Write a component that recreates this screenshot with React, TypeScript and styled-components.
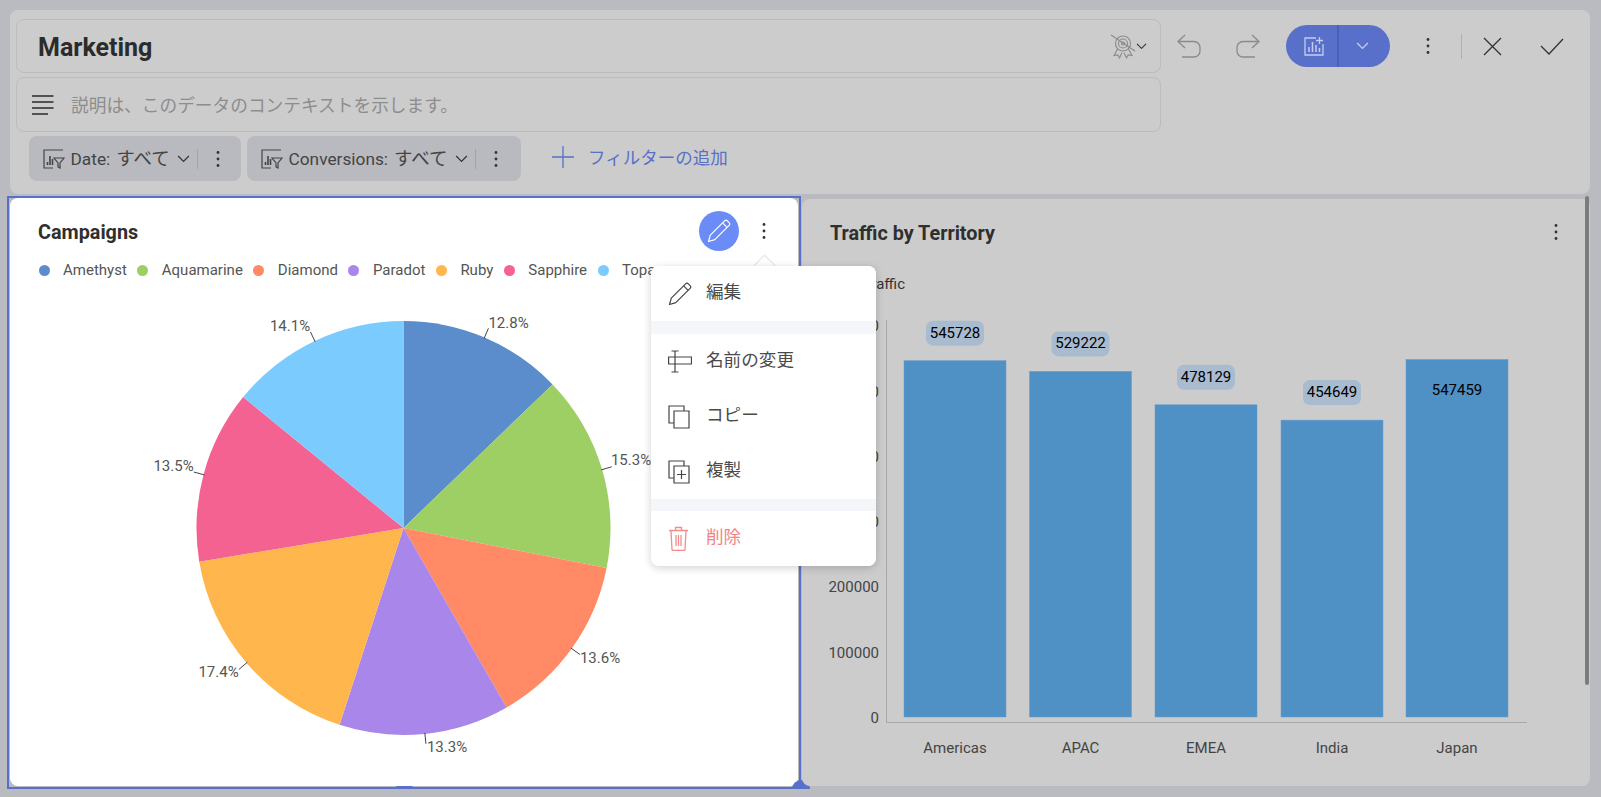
import React from "react";
import styled, { createGlobalStyle } from "styled-components";

const Global = createGlobalStyle`
  html, body { margin: 0; padding: 0; overflow: hidden; }
  body { font-family: Roboto, "Noto Sans CJK JP", sans-serif; background: #babbc0; }
  * { box-sizing: border-box; }
`;

const Page = styled.div`
  position: relative;
  width: 1601px;
  height: 797px;
  padding: 10px 11px 0 7px;
  background: #babbc0;
  overflow: hidden;
`;
const Header = styled.header`
  display: flex;
  align-items: flex-start;
  height: 184px;
  margin-left: 3px;
  padding: 9px 0 0 6px;
  background: #cccccc;
  border-radius: 8px;
`;
const TitleColumn = styled.div`
  display: flex;
  flex-direction: column;
  width: 1145px;
  flex: none;
`;
const TitleBox = styled.div`
  display: flex;
  align-items: center;
  height: 54px;
  padding: 0 13px 0 21px;
  border: 1px solid #bcbcbc;
  border-radius: 8px;
`;
const TitleText = styled.h1`
  flex: 1;
  margin: 3px 0 0;
  font-size: 25px;
  font-weight: 700;
  color: #2b2b2b;
`;
const DescBox = styled.div`
  display: flex;
  align-items: center;
  gap: 17px;
  height: 55px;
  margin-top: 4px;
  padding: 0 16px 0 15px;
  border: 1px solid #bcbcbc;
  border-radius: 8px;
`;
const DescText = styled.span`
  margin-bottom: 2px;
  font-size: 17.7px;
  color: #8d8d8d;
`;
const FilterRow = styled.div`
  display: flex;
  align-items: center;
  gap: 6px;
  height: 45px;
  margin: 4px 0 0 13px;
`;
const FilterChip = styled.div<{ $width: number }>`
  display: flex;
  align-items: center;
  width: ${(p) => p.$width}px;
  height: 45px;
  padding-left: 14px;
  background: #b9bac0;
  border-radius: 8px;
  color: #444;
`;
const ChipLabel = styled.span`
  margin-left: 5.5px;
  font-size: 17.3px;
  color: #444;
`;
const ChipValue = styled.span`
  margin: -3px 7px 0 6px;
  font-size: 18.5px;
  color: #444;
`;
const ChipDivider = styled.span`
  width: 1px;
  height: 20px;
  margin: 0 17px 0 7px;
  background: #a4a4a8;
`;
const AddFilter = styled.div`
  display: flex;
  align-items: center;
  gap: 13px;
  margin: 0 0 4px 24px;
  font-size: 17.5px;
  color: #5870c9;
`;
const Actions = styled.div`
  display: flex;
  align-items: center;
  height: 54px;
`;
const ActionIcon = styled.span<{ $ml: number }>`
  display: flex;
  margin-left: ${(p) => p.$ml}px;
`;
const SplitButton = styled.div`
  display: flex;
  width: 104px;
  height: 42px;
  margin-left: 26px;
  background: #5870c9;
  border-radius: 21px;
  overflow: hidden;
`;
const SplitMain = styled.div`
  display: flex;
  align-items: center;
  justify-content: center;
  width: 53px;
  padding-left: 4px;
  border-right: 2px solid #4a60b2;
`;
const SplitSide = styled.div`
  display: flex;
  align-items: center;
  justify-content: center;
  flex: 1;
  padding-right: 4px;
`;
const ActionDivider = styled.span`
  width: 1px;
  height: 25px;
  margin-left: 30px;
  background: #b0b0b0;
`;
const ChartRow = styled.div`
  display: flex;
  align-items: flex-start;
  margin-top: 2px;
`;
const SelectionFrame = styled.div`
  position: relative;
  flex: none;
  width: 794px;
  height: 593px;
  padding: 0 1px 1px;
  border: 2px solid #5870c9;
`;
const CampaignCard = styled.section`
  display: flex;
  flex-direction: column;
  height: 100%;
  background: #fff;
  border-radius: 8px;
`;
const CardHead = styled.div<{ $pr: number }>`
  display: flex;
  align-items: center;
  flex: none;
  height: 40px;
  margin-top: 13px;
  padding: 0 ${(p) => p.$pr}px 0 28px;
`;
const CardTitle = styled.h2`
  flex: 1;
  margin: 2px 0 0;
  font-size: 19.8px;
  font-weight: 700;
  color: #2f2f2f;
`;
const EditCircle = styled.span`
  display: flex;
  align-items: center;
  justify-content: center;
  width: 40px;
  height: 40px;
  margin-right: 22px;
  background: #6b8cf7;
  border-radius: 50%;
`;
const Legend = styled.div`
  display: flex;
  align-items: center;
  flex: none;
  height: 18px;
  margin-top: 10px;
  margin-bottom: 1px;
  padding-left: 28.5px;
`;
const LegendItem = styled.div`
  display: flex;
  align-items: center;
  margin-right: 10.5px;
  font-size: 15px;
  color: #555;
`;
const LegendDot = styled.span<{ $color: string }>`
  width: 11px;
  height: 11px;
  margin-right: 13.5px;
  border-radius: 50%;
  background: ${(p) => p.$color};
`;
const ChartSvg = styled.svg`
  display: block;
  flex: 1;
  min-height: 0;
  margin-top: 5px;
`;
const BottomHandle = styled.span`
  position: absolute;
  left: 386px;
  bottom: -2px;
  width: 19px;
  height: 3px;
  background: #5870c9;
  border-radius: 3px 3px 0 0;
`;
const CornerHandle = styled.span`
  position: absolute;
  right: -11px;
  bottom: -2px;
  width: 18px;
  height: 9px;
  background: #5870c9;
  border-radius: 9px 9px 0 0;
`;
const TrafficCard = styled.section`
  position: relative;
  display: flex;
  flex-direction: column;
  flex: 1;
  height: 587px;
  margin: 3px 0 0 1px;
  background: #cccccc;
  border-radius: 8px;
`;
const TrafficLegend = styled.div`
  flex: none;
  height: 18px;
  margin-top: 23px;
  padding-left: 61px;
  font-size: 15px;
  line-height: 18px;
  color: #333;
`;
const Scrollbar = styled.span`
  position: absolute;
  top: -3px;
  right: 1px;
  width: 4px;
  height: 489px;
  background: #7c7c7c;
  border-radius: 2px;
`;
const Menu = styled.div`
  position: absolute;
  left: 651px;
  top: 266px;
  display: flex;
  flex-direction: column;
  width: 225px;
  height: 300px;
  background: #f5f6fa;
  border-radius: 8px;
  box-shadow: 0 2px 8px rgba(0, 0, 0, 0.18);
  overflow: hidden;
`;
const MenuArrow = styled.span`
  position: absolute;
  left: 755.5px;
  top: 257.5px;
  width: 17px;
  height: 17px;
  background: #fff;
  border: 1px solid #e3e3e3;
  transform: rotate(45deg);
`;
const MenuGroup = styled.div<{ $mt?: number }>`
  display: flex;
  flex-direction: column;
  margin-top: ${(p) => p.$mt ?? 0}px;
  background: #fff;
`;
const MenuItem = styled.div<{ $danger?: boolean }>`
  display: flex;
  align-items: center;
  gap: 14px;
  height: 55px;
  padding-left: 17px;
  font-size: 17.6px;
  color: ${(p) => (p.$danger ? "#f58383" : "#4a4a4a")};
`;
const MenuLabel = styled.span`
  margin-bottom: 6px;
`;
const MenuIconSlot = styled.span`
  display: flex;
  width: 24px;
`;

const Kebab = ({ color = "#333" }: { color?: string }) => (
  <svg width="6" height="18" viewBox="0 0 6 18">
    <circle cx="3" cy="2.5" r="1.4" fill={color} />
    <circle cx="3" cy="9" r="1.4" fill={color} />
    <circle cx="3" cy="15.5" r="1.4" fill={color} />
  </svg>
);
const Chevron = ({ color = "#333", w = 13 }: { color?: string; w?: number }) => (
  <svg width={w} height={w * 0.6} viewBox="0 0 13 8" fill="none" stroke={color} strokeWidth="1.3">
    <path d="M1 1l5.5 5.5L12 1" />
  </svg>
);
const PencilIcon = ({ color, size = 24 }: { color: string; size?: number }) => (
  <svg width={size} height={size} viewBox="0 0 24 24" fill="none" stroke={color} strokeWidth="1.2" strokeLinejoin="round">
    <path d="M1.5 22.5l1.8-6.3L17.6 1.9a2 2 0 0 1 2.8 0l1.7 1.7a2 2 0 0 1 0 2.8L7.8 20.7z" />
    <path d="M15.6 3.9l4.5 4.5" />
  </svg>
);
const FilterChart = () => (
  <svg width="22" height="20" viewBox="0 0 22 20" fill="none" stroke="#444" strokeWidth="1.2">
    <path d="M20 1H1v18h9" />
    <path d="M4.5 16v-3M7 16V7M9.5 16v-6" strokeWidth="1.6" />
    <path d="M11 9h10l-4 5v5l-2-1.2V14z" fill="#b9bac0" />
  </svg>
);
const LinesIcon = () => (
  <svg width="22" height="20" viewBox="0 0 22 20" fill="none" stroke="#2a2a2a" strokeWidth="1.3">
    <path d="M0 1h21.5M0 7h21.5M0 13h21.5M0 19h16" />
  </svg>
);
const BadgeIcon = () => (
  <svg width="26" height="25" viewBox="0 0 26 25" fill="none" stroke="#8a8a8a" strokeWidth="1.1">
    <circle cx="13" cy="9.5" r="7.5" />
    <circle cx="13" cy="9.5" r="4.5" />
    <circle cx="13" cy="9.5" r="1.5" />
    <path d="M7.5 15l-3.5 6.5 3.8-.6 1.7 3 2.5-5.2M18.5 15l3.5 6.5-3.8-.6-1.700 3-2.500-5.200" />
    <path d="M1 1l24 16" />
  </svg>
);
const UndoIcon = () => (
  <svg width="24" height="24" viewBox="0 0 24 24" fill="none" stroke="#8a8a8a" strokeWidth="1.3">
    <path d="M8 1L1 7.5 8 14M1 7.5h16a6 6 0 0 1 6 6v3.500a6 6 0 0 1-6 6H5" />
  </svg>
);
const RedoIcon = () => (
  <svg width="24" height="24" viewBox="0 0 24 24" fill="none" stroke="#8a8a8a" strokeWidth="1.3">
    <path d="M16 1l7 6.5L16 14M23 7.5H7a6 6 0 0 0-6 6v3.500a6 6 0 0 0 6 6h12" />
  </svg>
);
const AddChartIcon = () => (
  <svg width="20" height="19" viewBox="0 0 20 19" fill="none" stroke="#c4cdee" strokeWidth="1.3">
    <path d="M12 1H1v17h18V7" />
    <path d="M15.5 0v7M12 3.5h7" />
    <path d="M5 15v-5M8.5 15V5M12 15V8M15.5 15v-4" strokeWidth="1.5" />
  </svg>
);
const CloseIcon = () => (
  <svg width="19" height="19" viewBox="0 0 19 19" stroke="#333" strokeWidth="1.3">
    <path d="M1 1l17 17M18 1L1 18" />
  </svg>
);
const CheckIcon = () => (
  <svg width="24" height="17" viewBox="0 0 24 17" fill="none" stroke="#333" strokeWidth="1.3">
    <path d="M1 8l8 8L23 1" />
  </svg>
);
const RenameIcon = () => (
  <svg width="24" height="24" viewBox="0 0 24 24" fill="none" stroke="#444" strokeWidth="1.2">
    <path d="M7 7H.6v7H7M7 7h16.5v7H7" />
    <path d="M7 1v21M3.5 1h7M3.5 22h7" />
  </svg>
);
const CopyIcon = () => (
  <svg width="22" height="24" viewBox="0 0 22 24" fill="none" stroke="#444" strokeWidth="1.2">
    <path d="M6 18H1V1h15v5" />
    <path d="M6 6h15v17H6z" />
  </svg>
);
const DuplicateIcon = () => (
  <svg width="22" height="24" viewBox="0 0 22 24" fill="none" stroke="#444" strokeWidth="1.2">
    <path d="M6 18H1V1h15v5" />
    <path d="M6 6h15v17H6z" />
    <path d="M13.5 10v9M9 14.5h9" />
  </svg>
);
const TrashIcon = () => (
  <svg width="22" height="25" viewBox="0 0 22 25" fill="none" stroke="#f58b8b" strokeWidth="1.3">
    <path d="M1 4.5h19M7.5 4.5V1.5h6v3" />
    <path d="M3 5l1 18.5a1 1 0 0 0 1 1h11a1 1 0 0 0 1-1L18 5" />
    <path d="M8 9v11M10.5 9v11M13 9v11" />
  </svg>
);

const slices = [
  { name: "Amethyst", color: "#5b8ccb", pct: 12.8, lx: 508.5, ly: 322.6 },
  { name: "Aquamarine", color: "#9dcf64", pct: 15.3, lx: 631, ly: 460 },
  { name: "Diamond", color: "#ff8a65", pct: 13.6, lx: 600, ly: 657.5 },
  { name: "Paradot", color: "#a986ea", pct: 13.3, lx: 447, ly: 747 },
  { name: "Ruby", color: "#ffb64d", pct: 17.4, lx: 218.5, ly: 672 },
  { name: "Sapphire", color: "#f46292", pct: 13.5, lx: 173.5, ly: 465.6 },
  { name: "Topaz", color: "#7ccbff", pct: 14.1, lx: 290, ly: 325.7 },
];
const CX = 403.5;
const CY = 528;
const R = 207;
const polar = (pct: number, r: number): [number, number] => {
  const a = (pct / 100) * 2 * Math.PI;
  return [CX + r * Math.sin(a), CY - r * Math.cos(a)];
};

const PieChart = () => {
  let acc = 0;
  return (
    <ChartSvg viewBox="10 285 788 501" preserveAspectRatio="xMinYMin meet">
      {slices.map((s) => {
        const start = acc;
        acc += s.pct;
        const [x1, y1] = polar(start, R);
        const [x2, y2] = polar(acc, R);
        const mid = start + s.pct / 2;
        const [ix, iy] = polar(mid, R - 1);
        const [ox, oy] = polar(mid, R + 10);
        return (
          <g key={s.name}>
            <path d={`M${CX} ${CY}L${x1} ${y1}A${R} ${R} 0 0 1 ${x2} ${y2}Z`} fill={s.color} />
            <path d={`M${ix} ${iy}L${ox} ${oy}`} stroke="#444" strokeWidth="1" />
            <text x={s.lx} y={s.ly + 5} textAnchor="middle" fontSize="15" fill="#555" fontFamily="Roboto">
              {s.pct}%
            </text>
          </g>
        );
      })}
    </ChartSvg>
  );
};

const bars = [
  { name: "Americas", v: 545728, x: 904, chip: true },
  { name: "APAC", v: 529222, x: 1029.5, chip: true },
  { name: "EMEA", v: 478129, x: 1155, chip: true },
  { name: "India", v: 454649, x: 1281, chip: true },
  { name: "Japan", v: 547459, x: 1406, chip: false },
];
const K = 0.000653;
const BarChart = () => (
  <ChartSvg viewBox="802 298 788 488" preserveAspectRatio="xMinYMin meet">
    {[0, 1, 2, 3, 4, 5, 6].map((i) => (
      <text key={i} x={879} y={723 - i * 65.3} textAnchor="end" fontSize="15" fill="#444" fontFamily="Roboto">
        {i * 100000}
      </text>
    ))}
    <path d="M886.5 320V722.5H1527" fill="none" stroke="#a8a8a8" strokeWidth="1" />
    {bars.map((b) => {
      const top = 717 - b.v * K;
      const labelY = b.chip ? top - 28 : top + 30;
      return (
        <g key={b.name}>
          <rect x={b.x} y={top} width={102} height={717 - top} fill="#4f90c5" stroke="#6a9ccb" strokeWidth="0.5" />
          {b.chip && <rect x={b.x + 22} y={labelY - 12} width={58} height={25} rx={7} fill="#a8bbcf" />}
          <text x={b.x + 51} y={labelY + 5} textAnchor="middle" fontSize="15" fill="#000" fontFamily="Roboto">
            {b.v}
          </text>
          <text x={b.x + 51} y={753} textAnchor="middle" fontSize="15" fill="#444" fontFamily="Roboto">
            {b.name}
          </text>
        </g>
      );
    })}
  </ChartSvg>
);

export default function App() {
  return (
    <Page>
      <Global />
      <Header>
        <TitleColumn>
          <TitleBox>
            <TitleText>Marketing</TitleText>
            <BadgeIcon />
            <Chevron w={11} />
          </TitleBox>
          <DescBox>
            <LinesIcon />
            <DescText>説明は、このデータのコンテキストを示します。</DescText>
          </DescBox>
          <FilterRow>
            <FilterChip $width={212}>
              <FilterChart />
              <ChipLabel>Date:</ChipLabel>
              <ChipValue>すべて</ChipValue>
              <Chevron />
              <ChipDivider />
              <Kebab />
            </FilterChip>
            <FilterChip $width={274}>
              <FilterChart />
              <ChipLabel>Conversions:</ChipLabel>
              <ChipValue>すべて</ChipValue>
              <Chevron />
              <ChipDivider />
              <Kebab />
            </FilterChip>
            <AddFilter>
              <svg width="24" height="24" viewBox="0 0 24 24" stroke="#5870c9" strokeWidth="1.3">
                <path d="M12 1v22M1 12h22" />
              </svg>
              フィルターの追加
            </AddFilter>
          </FilterRow>
        </TitleColumn>
        <Actions>
          <ActionIcon $ml={16}><UndoIcon /></ActionIcon>
          <ActionIcon $ml={35}><RedoIcon /></ActionIcon>
          <SplitButton>
            <SplitMain><AddChartIcon /></SplitMain>
            <SplitSide><Chevron color="#c4cdee" /></SplitSide>
          </SplitButton>
          <ActionIcon $ml={35}><Kebab /></ActionIcon>
          <ActionDivider />
          <ActionIcon $ml={21}><CloseIcon /></ActionIcon>
          <ActionIcon $ml={38}><CheckIcon /></ActionIcon>
        </Actions>
      </Header>
      <ChartRow>
        <SelectionFrame>
          <CampaignCard>
            <CardHead $pr={31}>
              <CardTitle>Campaigns</CardTitle>
              <EditCircle><PencilIcon color="#fff" /></EditCircle>
              <Kebab />
            </CardHead>
            <Legend>
              {slices.map((s) => (
                <LegendItem key={s.name}>
                  <LegendDot $color={s.color} />
                  {s.name}
                </LegendItem>
              ))}
            </Legend>
            <PieChart />
          </CampaignCard>
          <BottomHandle />
          <CornerHandle />
        </SelectionFrame>
        <TrafficCard>
          <CardHead $pr={31}>
            <CardTitle>Traffic by Territory</CardTitle>
            <Kebab />
          </CardHead>
          <TrafficLegend>Traffic</TrafficLegend>
          <BarChart />
          <Scrollbar />
        </TrafficCard>
      </ChartRow>
      <MenuArrow />
      <Menu>
        <MenuGroup>
          <MenuItem><MenuIconSlot><PencilIcon color="#444" /></MenuIconSlot><MenuLabel>編集</MenuLabel></MenuItem>
        </MenuGroup>
        <MenuGroup $mt={13}>
          <MenuItem><MenuIconSlot><RenameIcon /></MenuIconSlot><MenuLabel>名前の変更</MenuLabel></MenuItem>
          <MenuItem><MenuIconSlot><CopyIcon /></MenuIconSlot><MenuLabel>コピー</MenuLabel></MenuItem>
          <MenuItem><MenuIconSlot><DuplicateIcon /></MenuIconSlot><MenuLabel>複製</MenuLabel></MenuItem>
        </MenuGroup>
        <MenuGroup $mt={12}>
          <MenuItem $danger><MenuIconSlot><TrashIcon /></MenuIconSlot><MenuLabel>削除</MenuLabel></MenuItem>
        </MenuGroup>
      </Menu>
    </Page>
  );
}
